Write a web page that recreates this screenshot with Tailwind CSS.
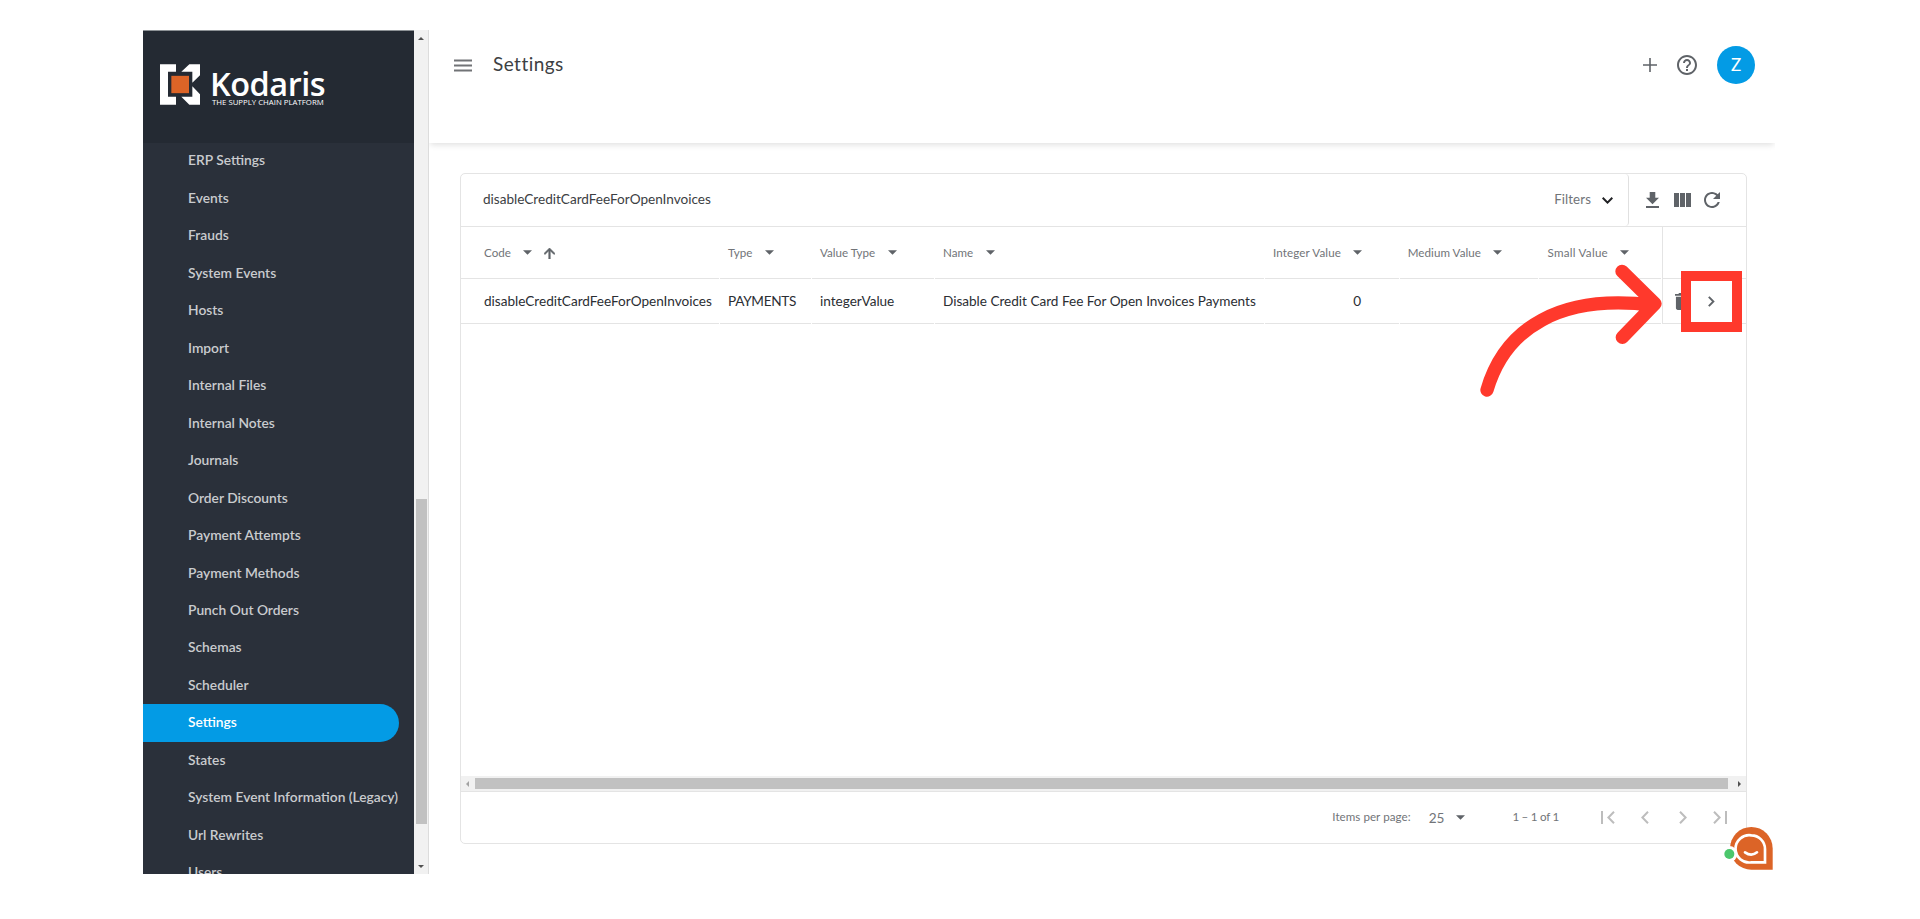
<!DOCTYPE html>
<html lang="en">

<head>
    <meta charset="UTF-8">
    <meta name="viewport" content="width=device-width, initial-scale=1.0">
    <title>Kodaris - Settings</title>
    <script src="https://cdn.jsdelivr.net/npm/@tailwindcss/browser@4"></script>
</head>

<body class="bg-white font-['Lato',sans-serif] h-screen overflow-hidden">

    <div class="relative flex w-[1632px] h-[844px] ml-[143px] mt-[30px]">

        <!-- Sidebar -->
        <aside class="w-[271px] shrink-0 bg-[#2a303a] flex flex-col overflow-hidden border-t border-[#8d9296]">
            <div class="h-[112px] shrink-0 bg-[#242a33] flex items-start pl-[17px] pt-[33px]">
                <svg class="w-[40px] h-[41px] shrink-0" viewBox="0 0 120 122">
                    <path fill="#fff" d="M0 0H48V23H24V98H48V122H0ZM88 0H120V33L97 56V23H64ZM97 66L120 90V122H88L64 98H97Z" />
                    <rect x="34" y="35" width="53" height="52" fill="#dc6427" />
                </svg>
                <div class="pl-[10px] pt-[5px] text-white font-['Open_Sans',sans-serif] whitespace-nowrap">
                    <div class="text-[32.5px] leading-[30px] font-semibold tracking-[-0.5px]">Kodaris</div>
                    <div class="text-[7.8px] leading-[8px] -mt-px pl-[2px] font-medium">THE SUPPLY CHAIN PLATFORM</div>
                </div>
            </div>
            <nav class="-mt-[1px] text-[#c9cbce] text-[13.8px] font-semibold whitespace-nowrap">
                <ul>
                    <li class="h-[37.47px] pl-[45px] flex items-center">ERP Settings</li>
                    <li class="h-[37.47px] pl-[45px] flex items-center">Events</li>
                    <li class="h-[37.47px] pl-[45px] flex items-center">Frauds</li>
                    <li class="h-[37.47px] pl-[45px] flex items-center">System Events</li>
                    <li class="h-[37.47px] pl-[45px] flex items-center">Hosts</li>
                    <li class="h-[37.47px] pl-[45px] flex items-center">Import</li>
                    <li class="h-[37.47px] pl-[45px] flex items-center">Internal Files</li>
                    <li class="h-[37.47px] pl-[45px] flex items-center">Internal Notes</li>
                    <li class="h-[37.47px] pl-[45px] flex items-center">Journals</li>
                    <li class="h-[37.47px] pl-[45px] flex items-center">Order Discounts</li>
                    <li class="h-[37.47px] pl-[45px] flex items-center">Payment Attempts</li>
                    <li class="h-[37.47px] pl-[45px] flex items-center">Payment Methods</li>
                    <li class="h-[37.47px] pl-[45px] flex items-center">Punch Out Orders</li>
                    <li class="h-[37.47px] pl-[45px] flex items-center">Schemas</li>
                    <li class="h-[37.47px] pl-[45px] flex items-center">Scheduler</li>
                    <li class="h-[37.47px] pl-[45px] mr-[15px] flex items-center bg-[#039be5] text-white rounded-r-full">Settings</li>
                    <li class="h-[37.47px] pl-[45px] flex items-center">States</li>
                    <li class="h-[37.47px] pl-[45px] flex items-center">System Event Information (Legacy)</li>
                    <li class="h-[37.47px] pl-[45px] flex items-center">Url Rewrites</li>
                    <li class="h-[37.47px] pl-[45px] flex items-center">Users</li>
                </ul>
            </nav>
        </aside>

        <!-- Sidebar scrollbar -->
        <div class="w-[15px] shrink-0 bg-[#f1f1f1] border-r border-[#dcdcdc] flex flex-col items-center">
            <svg class="w-[6px] h-[3px] mt-[7px] shrink-0" viewBox="0 0 6 3"><path fill="#505050" d="M0 3L3 0L6 3Z" /></svg>
            <div class="w-[11px] h-[325px] mt-[459px] bg-[#c1c1c1]"></div>
            <svg class="w-[6px] h-[3px] mt-auto mb-[6px] shrink-0" viewBox="0 0 6 3"><path fill="#505050" d="M0 0L3 3L6 0Z" /></svg>
        </div>

        <!-- Main Content -->
        <main class="flex-1 flex flex-col overflow-hidden">
            <header class="h-[113px] shrink-0 flex items-start pl-[25px] pr-[20px] pt-[16px] shadow-[0_3px_6px_-1px_rgba(0,0,0,0.12)]">
                <svg class="w-[18px] h-[13px] mt-[13px]" viewBox="0 0 18 13"><path stroke="#717376" stroke-width="2" d="M0 1.5H18M0 6.5H18M0 11.5H18" /></svg>
                <h1 class="ml-[21px] text-[19px] leading-[35px] text-[#3c4043] tracking-[0.45px]">Settings</h1>
                <div class="ml-auto flex items-center">
                    <svg class="w-[14px] h-[14px]" viewBox="0 0 14 14"><path stroke="#5f6368" stroke-width="1.6" d="M7 0V14M0 7H14" /></svg>
                    <svg class="w-[20px] h-[20px] ml-[20px]" viewBox="2 2 20 20"><path fill="#5f6368" d="M11 18h2v-2h-2v2zm1-16C6.48 2 2 6.48 2 12s4.48 10 10 10 10-4.48 10-10S17.52 2 12 2zm0 18c-4.41 0-8-3.59-8-8s3.59-8 8-8 8 3.59 8 8-3.59 8-8 8zm0-14c-2.21 0-4 1.79-4 4h2c0-1.1.9-2 2-2s2 .9 2 2c0 2-3 1.75-3 5h2c0-2.25 3-2.5 3-5 0-2.21-1.79-4-4-4z" /></svg>
                    <div class="w-[38px] h-[38px] ml-[20px] rounded-full bg-[#039be5] text-white text-[17px] flex items-center justify-center">Z</div>
                </div>
            </header>

            <!-- Settings table -->
            <section class="w-[1287px] h-[671px] mt-[30px] ml-[31px] border border-[#e4e4e4] rounded-[5px] flex flex-col text-[#2b2e33] whitespace-nowrap">
                <div class="h-[53px] shrink-0 border-b border-[#e4e4e4] flex">
                    <div class="w-[1168px] flex items-center pl-[22px] pr-[15px] border-r border-[#e0e0e0] rounded-r-[4px]">
                        <span class="text-[13.6px] tracking-[-0.02px] text-[#3c4043] -mt-[2px]">disableCreditCardFeeForOpenInvoices</span>
                        <span class="ml-auto text-[13.3px] tracking-[0.1px] text-[#717478] -mt-px">Filters</span>
                        <svg class="w-[11px] h-[7px] ml-[11px] mt-[1px]" viewBox="0 0 11 7"><path fill="none" stroke="#202124" stroke-width="2" d="M.7 .8L5.5 5.6L10.3 .8" /></svg>
                    </div>
                    <div class="flex items-center pl-[17px]">
                        <svg class="w-[13px] h-[16px] -mt-px" viewBox="5 3 14 17" preserveAspectRatio="none"><path fill="#5f6368" d="M19 9h-4V3H9v6H5l7 7 7-7zM5 18v2h14v-2H5z" /></svg>
                        <svg class="w-[17px] h-[14px] ml-[15px]" viewBox="0 0 17 14"><path fill="#5f6368" d="M0 0H5V14H0ZM6 0H11V14H6ZM12 0H17V14H12Z" /></svg>
                        <svg class="w-[16px] h-[16px] ml-[13px]" viewBox="4 4 16 16"><path fill="#5f6368" d="M17.65 6.35C16.2 4.9 14.21 4 12 4c-4.42 0-7.99 3.58-7.99 8s3.57 8 7.99 8c3.73 0 6.84-2.55 7.73-6h-2.08c-.82 2.33-3.04 4-5.65 4-3.31 0-6-2.69-6-6s2.69-6 6-6c1.66 0 3.14.69 4.22 1.78L13 11h7V4l-2.35 2.35z" /></svg>
                    </div>
                </div>

                <div class="h-[52px] shrink-0 flex gap-px text-[11.6px] text-[#717478]">
                    <div class="w-[258px] border-b border-[#e4e4e4] flex items-center pl-[23px]">
                        Code
                        <svg class="w-[9px] h-[5px] ml-[12px]" viewBox="0 0 10 5"><path fill="#5f6368" d="M0 0L5 5L10 0Z" /></svg>
                        <svg class="w-[11px] h-[11px] ml-[12px] mt-px" viewBox="4 4 16 16"><path fill="#5f6368" d="M4 12l1.41 1.41L11 7.83V20h2V7.83l5.58 5.59L20 12l-8-8-8 8z" stroke="#5f6368" /></svg>
                    </div>
                    <div class="w-[91px] border-b border-[#e4e4e4] flex items-center pl-[8px]">
                        Type
                        <svg class="w-[9px] h-[5px] ml-[13px]" viewBox="0 0 10 5"><path fill="#5f6368" d="M0 0L5 5L10 0Z" /></svg>
                    </div>
                    <div class="w-[122px] border-b border-[#e4e4e4] flex items-center pl-[8px]">
                        Value Type
                        <svg class="w-[9px] h-[5px] ml-[13px]" viewBox="0 0 10 5"><path fill="#5f6368" d="M0 0L5 5L10 0Z" /></svg>
                    </div>
                    <div class="w-[329px] border-b border-[#e4e4e4] flex items-center pl-[8px]">
                        Name
                        <svg class="w-[9px] h-[5px] ml-[13px]" viewBox="0 0 10 5"><path fill="#5f6368" d="M0 0L5 5L10 0Z" /></svg>
                    </div>
                    <div class="w-[134px] border-b border-[#e4e4e4] flex items-center justify-end pr-[37px] tracking-[0.12px]">
                        Integer Value
                        <svg class="w-[9px] h-[5px] ml-[12px]" viewBox="0 0 10 5"><path fill="#5f6368" d="M0 0L5 5L10 0Z" /></svg>
                    </div>
                    <div class="w-[138px] border-b border-[#e4e4e4] flex items-center justify-end pr-[36px] tracking-[0.06px]">
                        Medium Value
                        <svg class="w-[9px] h-[5px] ml-[12px]" viewBox="0 0 10 5"><path fill="#5f6368" d="M0 0L5 5L10 0Z" /></svg>
                    </div>
                    <div class="w-[122px] border-b border-[#e4e4e4] flex items-center justify-end pr-[32px] tracking-[0.26px]">
                        Small Value
                        <svg class="w-[9px] h-[5px] ml-[12px]" viewBox="0 0 10 5"><path fill="#5f6368" d="M0 0L5 5L10 0Z" /></svg>
                    </div>
                    <div class="flex-1 border-b border-l border-[#e4e4e4]"></div>
                </div>

                <div class="h-[45px] shrink-0 flex gap-px text-[13.6px] tracking-[-0.02px]">
                    <div class="w-[258px] border-b border-[#e4e4e4] flex items-center pt-px pl-[23px]">disableCreditCardFeeForOpenInvoices</div>
                    <div class="w-[91px] border-b border-[#e4e4e4] flex items-center pt-px pl-[8px] tracking-[-0.3px]">PAYMENTS</div>
                    <div class="w-[122px] border-b border-[#e4e4e4] flex items-center pt-px pl-[8px]">integerValue</div>
                    <div class="w-[329px] border-b border-[#e4e4e4] flex items-center pt-px pl-[8px]">Disable Credit Card Fee For Open Invoices Payments</div>
                    <div class="w-[134px] border-b border-[#e4e4e4] flex items-center pt-px justify-end pr-[38px]">0</div>
                    <div class="w-[138px] border-b border-[#e4e4e4]"></div>
                    <div class="w-[122px] border-b border-[#e4e4e4]"></div>
                    <div class="flex-1 border-b border-l border-[#e4e4e4] flex items-center pl-[12px]">
                        <svg class="w-[13px] h-[17px]" viewBox="5 3 14 18" preserveAspectRatio="none"><path fill="#5f6368" d="M6 19c0 1.1.9 2 2 2h8c1.1 0 2-.9 2-2V7H6v12zM19 4h-3.5l-1-1h-5l-1 1H5v2h14V4z" /></svg>
                        <svg class="w-[7px] h-[11px] ml-[20px]" viewBox="0 0 7 11"><path fill="none" stroke="#5f6368" stroke-width="1.9" d="M.8 .8L5.4 5.5L.8 10.2" /></svg>
                    </div>
                </div>

                <!-- Horizontal scrollbar -->
                <div class="h-[15px] mt-auto shrink-0 bg-[#f1f1f1] flex items-center pl-[5px]">
                    <svg class="w-[3px] h-[6px]" viewBox="0 0 3 6"><path fill="#a3a3a3" d="M3 0L0 3L3 6Z" /></svg>
                    <div class="w-[1253px] h-[11px] ml-[6px] bg-[#c1c1c1]"></div>
                    <svg class="w-[3px] h-[6px] ml-[10px]" viewBox="0 0 3 6"><path fill="#505050" d="M0 0L3 3L0 6Z" /></svg>
                </div>

                <!-- Paginator -->
                <div class="h-[52px] shrink-0 border-t border-[#e4e4e4] flex items-center justify-end pr-[19px] text-[11.6px] text-[#717478]">
                    <span class="tracking-[0.05px] -mt-px">Items per page:</span>
                    <span class="ml-[18px] text-[13.6px] mt-px">25</span>
                    <svg class="w-[9px] h-[5px] ml-[12px]" viewBox="0 0 10 5"><path fill="#5f6368" d="M0 0L5 5L10 0Z" /></svg>
                    <span class="ml-[47px] tracking-[-0.25px] -mt-px">1 – 1 of 1</span>
                    <svg class="w-[14px] h-[13px] ml-[42px]" viewBox="0 0 14 13"><path fill="none" stroke="#bdbdbd" stroke-width="2" d="M1 0V13M13 .8L7.4 6.5L13 12.2" /></svg>
                    <svg class="w-[8px] h-[13px] ml-[26px]" viewBox="0 0 8 13"><path fill="none" stroke="#bdbdbd" stroke-width="2" d="M7 .8L1.4 6.5L7 12.2" /></svg>
                    <svg class="w-[8px] h-[13px] ml-[30px]" viewBox="0 0 8 13"><path fill="none" stroke="#bdbdbd" stroke-width="2" d="M1 .8L6.6 6.5L1 12.2" /></svg>
                    <svg class="w-[14px] h-[13px] ml-[26px]" viewBox="0 0 14 13"><path fill="none" stroke="#bdbdbd" stroke-width="2" d="M13 0V13M1 .8L6.6 6.5L1 12.2" /></svg>
                </div>
            </section>
        </main>

        <!-- Chat widget -->
        <svg class="absolute left-[1580px] top-[796px] w-[50px] h-[44px]" viewBox="0 0 150 132">
            <path fill="#dc6427" d="M85 3A64 64 0 1 0 85 131H149V67A64 64 0 0 0 85 3Z" />
            <path fill="none" stroke="#fff" stroke-width="8" d="M85 28A41 41 0 1 0 85 109H126V69A41 41 0 0 0 85 28Z" />
            <path fill="none" stroke="#fff" stroke-width="8" stroke-linecap="round" d="M66 79Q85 93 102 79" />
            <circle cx="19" cy="84" r="24" fill="#fff" />
            <circle cx="19" cy="84" r="15" fill="#4bc76c" />
        </svg>

        <!-- Callout arrow -->
        <svg class="absolute left-[1327px] top-[230px] w-[200px] h-[140px]" viewBox="90 300 600 420">
            <path fill="none" stroke="#ff392c" stroke-width="40" stroke-linecap="round" stroke-linejoin="round" d="M141 690C195 505 360 400 640 436M546 334L645 431L547 532" />
        </svg>
        <div class="absolute left-[1538px] top-[241px] w-[61px] h-[61px] border-[10px] border-[#ff392c]"></div>
    </div>

</body>

</html>
